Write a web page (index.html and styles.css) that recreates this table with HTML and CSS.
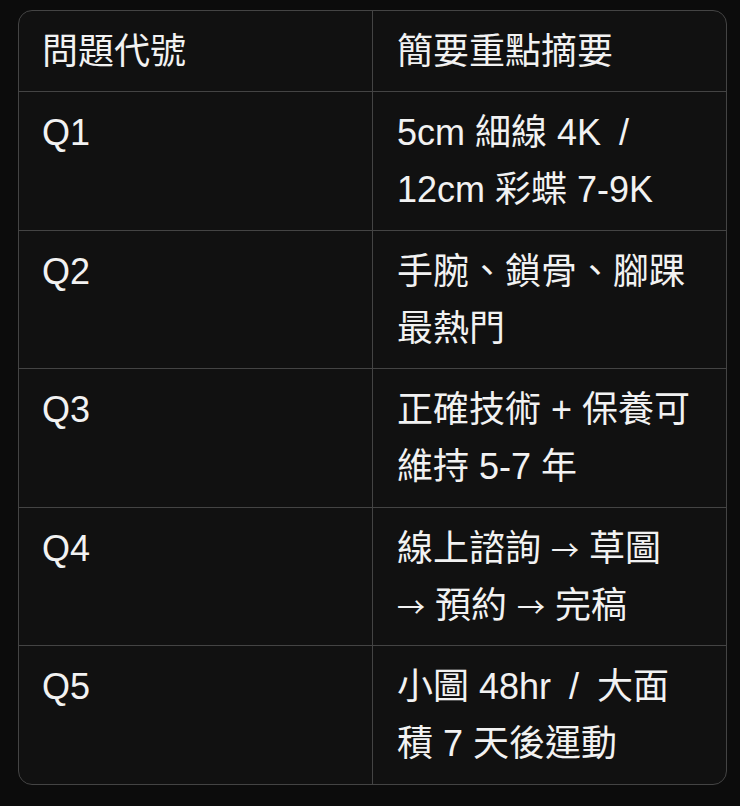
FILE: index.html
```html
<!DOCTYPE html>
<html lang="zh-Hant">
<head>
<meta charset="utf-8">
<title>問題摘要</title>
<link rel="stylesheet" href="styles.css">
</head>
<body>
<div class="wrap">
  <table class="summary">
    <thead>
      <tr><th>問題代號</th><th>簡要重點摘要</th></tr>
    </thead>
    <tbody>
      <tr><td>Q1</td><td>5cm 細線 4K&ensp;/&ensp;12cm 彩蝶 7-9K</td></tr>
      <tr><td>Q2</td><td>手腕、鎖骨、腳踝最熱門</td></tr>
      <tr><td>Q3</td><td>正確技術 + 保養可維持 5-7 年</td></tr>
      <tr><td>Q4</td><td>線上諮詢 <span class="arr">→</span> 草圖 <span class="nw"><span class="arr">→</span> 預約</span> <span class="arr">→</span> 完稿</td></tr>
      <tr><td>Q5</td><td>小圖 48hr&ensp;/&ensp;大面積 7 天後運動</td></tr>
    </tbody>
  </table>
</div>
</body>
</html>
```

FILE: styles.css
```css
html, body {
  margin: 0;
  padding: 0;
  background: #0c0c0c;
}
body {
  font-family: "Liberation Sans", "Noto Sans CJK TC", sans-serif;
  color: #f2f2f2;
}
.wrap {
  padding: 10px 13px 0 18px;
}
.summary {
  width: 709px;
  table-layout: fixed;
  border-collapse: separate;
  border-spacing: 0;
  border: 1px solid #444444;
  border-radius: 14px;
  background: #111111;
  font-size: 36px;
  line-height: 57px;
}
.summary th,
.summary td {
  text-align: left;
  font-weight: 400;
  vertical-align: top;
  padding: 12px 24px 11.5px 23px;
  border-bottom: 1px solid #444444;
}
.summary th {
  padding-bottom: 11px;
}
.summary th:first-child,
.summary td:first-child {
  border-right: 1px solid #444444;
  width: 306px;
}
.summary th:last-child,
.summary td:last-child {
  padding-left: 24px;
  padding-right: 22px;
}
.summary tbody tr:last-child td {
  border-bottom: none;
}
.arr {
  font-family: "Noto Sans CJK TC", sans-serif;
  font-size: 28px;
  line-height: 1;
}
.nw {
  white-space: nowrap;
}
```
